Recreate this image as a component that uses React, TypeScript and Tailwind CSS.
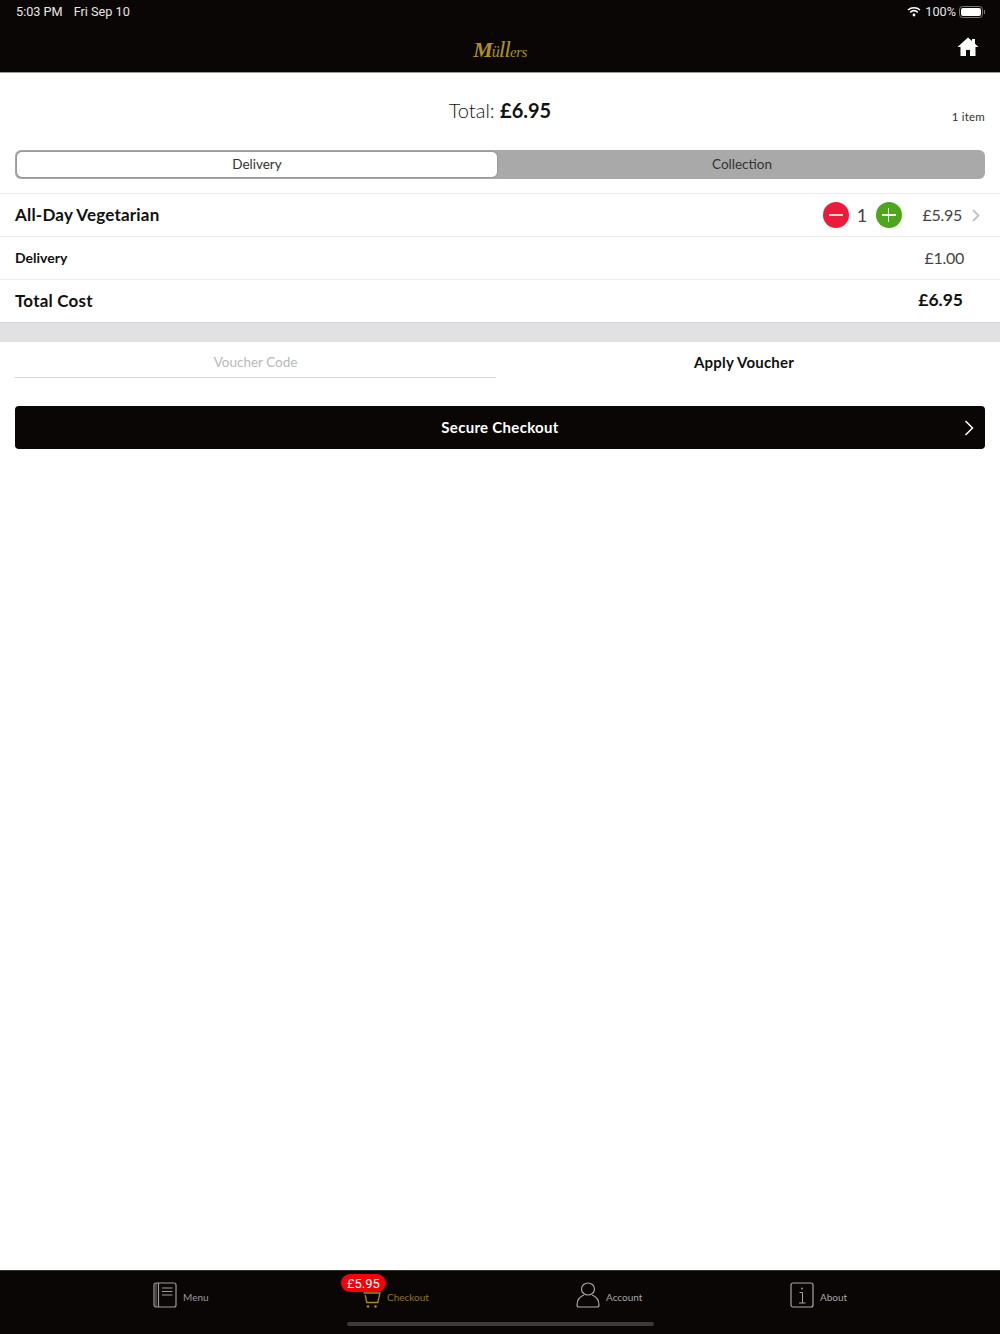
import React from "react";

const Lato = "font-['Lato','Liberation_Sans',sans-serif]";

function Menu() {
  return (
    <svg width="24" height="26" viewBox="0 0 24 26" fill="none" stroke="#9a9a9a" strokeWidth="1.2">
      <rect x="1" y="1" width="22" height="24" rx="2" />
      <path d="M5.5 1v24M9 6h10.5M9 13h10.5M9 9.5h10.5" />
      <path d="M3 1v24" strokeWidth="0.8" />
    </svg>
  );
}
function Cart() {
  return (
    <svg width="18" height="16" viewBox="0 0 18 16" fill="none" stroke="#a58a1f" strokeWidth="1.3">
      <path d="M0.5 1h16.500l-2.200 9.500H3.800L2.200 3" />
      <circle cx="5" cy="14.500" r="1.300" fill="#a58a1f" stroke="none" />
      <circle cx="12.500" cy="14.500" r="1.300" fill="#a58a1f" stroke="none" />
    </svg>
  );
}
function Person() {
  return (
    <svg width="24" height="26" viewBox="0 0 24 26" fill="none" stroke="#a5a5a5" strokeWidth="1.2">
      <ellipse cx="12" cy="7" rx="6.500" ry="6" />
      <path d="M8 13C4 14.500 1 18 1 23c0 1.300.7 2 2 2h18c1.300 0 2-.7 2-2 0-5-3-8.500-7-10" />
    </svg>
  );
}
function Info() {
  return (
    <svg width="24" height="26" viewBox="0 0 24 26" fill="none" stroke="#a5a5a5" strokeWidth="1.2">
      <rect x="1" y="1" width="22" height="24" rx="2" />
      <path d="M9.500 10.500h3V21M9 21h6.500" strokeWidth="1" />
      <circle cx="12" cy="6.500" r="0.900" fill="#a5a5a5" stroke="none" />
    </svg>
  );
}

function Tab({ icon, label, cls, color, iconCls }: { icon: React.ReactNode; label: string; cls: string; color: string; iconCls: string }) {
  return (
    <div className={`flex items-center gap-[6px] ${cls}`}>
      <div className={`flex ${iconCls}`}>{icon}</div>
      <span className={`text-[10px] leading-none ${color}`}>{label}</span>
    </div>
  );
}

export default function App() {
  return (
    <div className={`${Lato} flex h-[1334px] w-[1000px] flex-col bg-white text-[#111]`}>
      <header className="h-[73px] shrink-0 border-b border-[#9b9b9b] bg-[#0a0606]">
        <div className="flex h-[24px] items-center justify-between pl-[16px] pr-[15px] font-['Roboto',sans-serif] text-[12.700px] text-[#e6e6e6]">
          <div className="flex gap-[11px]">
            <span>5:03 PM</span>
            <span>Fri Sep 10</span>
          </div>
          <div className="flex items-center">
            <svg width="14" height="11" viewBox="0 0 14 11" fill="none" stroke="#fff" strokeWidth="1.6">
              <path d="M1 4c3.400-3 8.600-3 12 0M3.200 6.300c2.200-1.900 5.400-1.900 7.600 0" />
              <circle cx="7" cy="9" r="1.400" fill="#fff" stroke="none" />
            </svg>
            <span className="ml-[4px]">100%</span>
            <div className="ml-[3px] flex items-center">
              <div className="h-[12px] w-[24px] rounded-[3.500px] border border-[#777] p-[1px]">
                <div className="h-full w-full rounded-[2px] bg-white" />
              </div>
              <div className="ml-[1px] h-[4px] w-[1px] bg-[#777]" />
            </div>
          </div>
        </div>
        <div className="relative flex h-[48px] items-center justify-center">
          <span className="mt-[2px] flex items-baseline font-['Liberation_Serif',serif] font-bold italic leading-none tracking-[-1px] text-[#ac9026]">
            <span className="text-[22px]">M</span>
            <span className="text-[16px] font-normal">ü</span>
            <span className="text-[24px] font-normal">ll</span>
            <span className="text-[15px] font-normal tracking-[-0.500px]">ers</span>
          </span>
          <svg className="absolute right-[21px] top-[13px]" width="22" height="19" viewBox="0 0 22 19" fill="#fff">
            <path d="M11 0.500 0.500 10h3v9h5.500v-6h4v6H18.500v-9h3l-3.500-3.200V2h-3v2.100z" />
          </svg>
        </div>
      </header>

      <div className="relative flex h-[77px] shrink-0 items-center justify-center pb-[3px]">
        <div className="text-[20px] font-light leading-none">
          Total: <span className="font-bold">£6.95</span>
        </div>
        <span className="absolute right-[15px] top-[38px] text-[11.500px] leading-none tracking-[0.2px] text-[#333]">1 item</span>
      </div>

      <div className="mx-[15px] flex h-[29px] shrink-0 rounded-[6px] bg-[#a9a9a9] p-[2px]">
        <div className="flex w-[480px] items-center justify-center rounded-[5px] bg-white pb-[1px] text-[13.500px] text-[#333] shadow-[0_0_2px_rgba(0,0,0,0.3)]">
          Delivery
        </div>
        <div className="flex flex-1 items-center justify-center pb-[1px] pl-[4px] text-[13.500px] text-[#333]">Collection</div>
      </div>

      <div className="mt-[14px] flex h-[44px] shrink-0 items-center border-y border-[#ececec] pl-[15px] pr-[20px]">
        <span className="flex-1 text-[17px] font-bold tracking-[0.2px]">All-Day Vegetarian</span>
        <div className="flex h-[26px] w-[26px] items-center justify-center rounded-full bg-[#ec1b3b]">
          <div className="h-[1.500px] w-[14px] bg-white/80" />
        </div>
        <span className="w-[27px] text-center text-[18px] leading-none text-[#444]">1</span>
        <div className="relative flex h-[26px] w-[26px] items-center justify-center rounded-full bg-[#4ca71a]">
          <div className="h-[1.500px] w-[14px] bg-white/90" />
          <div className="absolute h-[14px] w-[1.500px] bg-white/90" />
        </div>
        <span className="ml-[21px] text-[16px] leading-none tracking-[-0.300px] text-[#444]">£5.95</span>
        <svg className="ml-[10px]" width="8" height="13" viewBox="0 0 8 13" fill="none" stroke="#c2c2c2" strokeWidth="1.800">
          <path d="M1 1l5.500 5.500L1 12" />
        </svg>
      </div>

      <div className="flex h-[43px] shrink-0 items-center justify-between border-b border-[#ececec] pl-[15px] pr-[36px]">
        <span className="pb-[2px] text-[14px] font-bold">Delivery</span>
        <span className="pb-[1px] text-[16px] leading-none tracking-[-0.300px] text-[#444]">£1.00</span>
      </div>

      <div className="flex h-[42px] shrink-0 items-center justify-between pl-[15px] pr-[37px]">
        <span className="text-[17px] font-bold tracking-[0.2px]">Total Cost</span>
        <span className="pb-[2px] text-[17.500px] font-bold leading-none">£6.95</span>
      </div>

      <div className="h-[20px] shrink-0 border-t border-[#d8d8da] bg-[#e1e1e3]" />

      <div className="flex h-[36px] shrink-0 px-[15px]">
        <div className="flex w-[481px] items-center justify-center border-b border-[#d9d9d9] pt-[5px] text-[13.500px] text-[#b8b8bc]">
          Voucher Code
        </div>
        <div className="flex flex-1 items-center justify-center pl-[7px] pt-[5px] text-[15px] font-bold tracking-[0.2px]">Apply Voucher</div>
      </div>

      <div className="relative mx-[15px] mt-[28px] flex h-[43px] shrink-0 items-center justify-center rounded-[4px] bg-[#0a0606] text-[15px] font-bold tracking-[0.3px] text-white">
        Secure Checkout
        <svg className="absolute right-[11px] top-[14px]" width="10" height="16" viewBox="0 0 10 16" fill="none" stroke="#fff" strokeWidth="1.500">
          <path d="M1.500 1l7 7-7 7" />
        </svg>
      </div>

      <div className="flex-1" />

      <nav className="relative h-[64px] shrink-0 border-t border-[#333] bg-[#0a0606]">
        <div className="flex h-[51px] items-center pt-[1px]">
          <Tab icon={<Menu />} iconCls="mb-[4px]" label="Menu" cls="ml-[153px] w-[210px]" color="text-[#9a9a9a]" />
          <div className="relative">
            <Tab icon={<Cart />} iconCls="mt-[5px]" label="Checkout" cls="w-[213px]" color="text-[#8c7520]" />
            <span className="absolute -left-[22px] -top-[12.500px] rounded-full bg-[#f40009] px-[6px] py-[1.500px] font-['Roboto',sans-serif] text-[13px] leading-[15px] text-white">
              £5.95
            </span>
          </div>
          <Tab icon={<Person />} iconCls="mb-[4px]" label="Account" cls="w-[214px]" color="text-[#a5a5a5]" />
          <Tab icon={<Info />} iconCls="mb-[4px]" label="About" cls="" color="text-[#a5a5a5]" />
        </div>
        <div className="mx-auto h-[4px] w-[307px] rounded-full bg-[#3a3a3a]" />
      </nav>
    </div>
  );
}
